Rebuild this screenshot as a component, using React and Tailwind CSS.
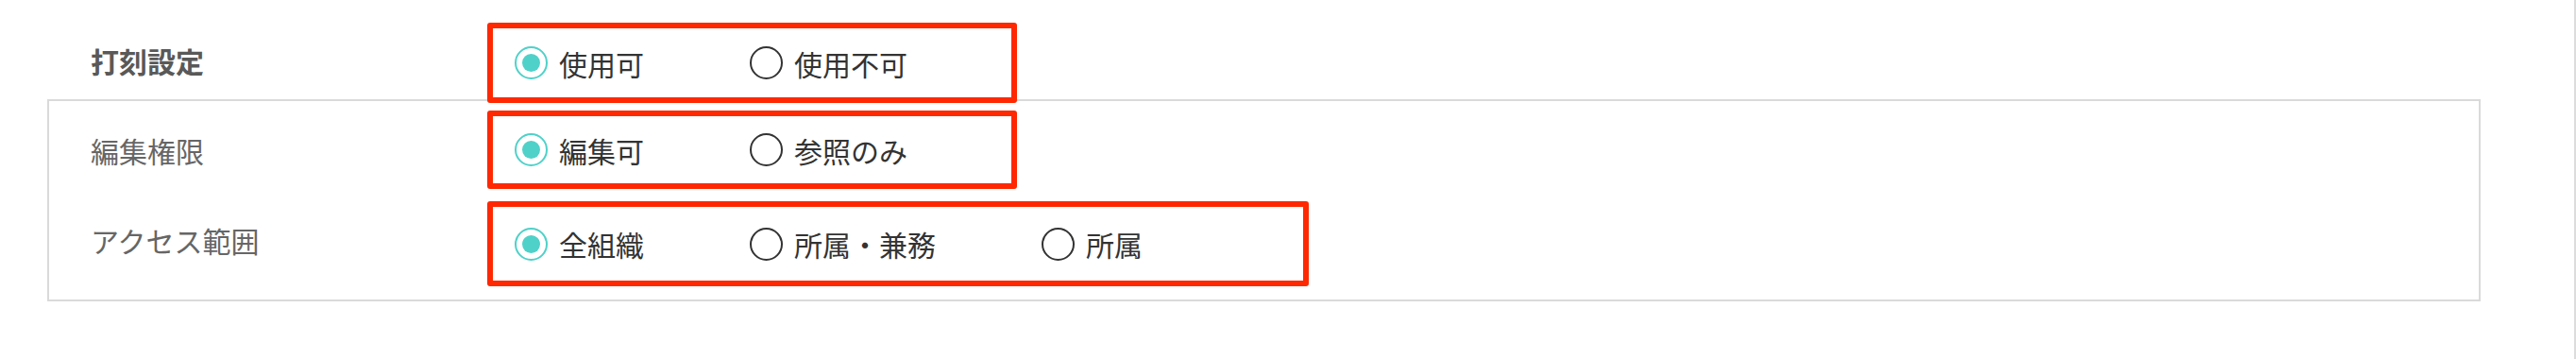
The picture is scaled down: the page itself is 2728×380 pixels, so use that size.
import React from "react";

const font = { fontFamily: '"Noto Sans CJK JP", "Noto Sans", sans-serif' };

function Radio({ checked }) {
  if (checked) {
    return (
      <span className="flex h-[35px] w-[35px] shrink-0 items-center justify-center rounded-full border-2 border-[#4fd1c9]">
        <span className="h-[19px] w-[19px] rounded-full bg-[#4fd1c9]" />
      </span>
    );
  }
  return <span className="h-[35px] w-[35px] shrink-0 rounded-full border-2 border-[#333333]" />;
}

function RadioGroup({ options, selected, className }) {
  return (
    <div className={"relative flex shrink-0 items-center rounded-[3px] border-[6px] border-[#ff2800] pl-[23px] " + className}>
      {options.map((o) => (
        <label key={o} className="mr-[112px] flex shrink-0 items-center gap-[12px] whitespace-nowrap text-[30px] leading-none text-[#333333]">
          <Radio checked={o === selected} />
          <span>{o}</span>
        </label>
      ))}
    </div>
  );
}

export default function App() {
  return (
    <div className="h-[380px] w-full border-r-2 border-[#dcdcdc] bg-white" style={font}>
      <div className="flex items-center pl-[96px] pt-[24px]">
        <div className="-mt-[5px] w-[420px] shrink-0 whitespace-nowrap text-[30px] font-bold leading-none text-[#595959]">打刻設定</div>
        <RadioGroup className="h-[85px] w-[561px]" options={["使用可", "使用不可"]} selected="使用可" />
      </div>

      <div className="-mt-[4px] ml-[50px] flex w-[2577px] flex-col gap-[13px] border-2 border-[#dadada] pb-[14px] pt-[10px]">
        <div className="flex items-center pl-[44px]">
          <div className="w-[420px] shrink-0 whitespace-nowrap text-[30px] leading-none text-[#666666]">編集権限</div>
          <RadioGroup className="h-[83px] w-[561px]" options={["編集可", "参照のみ"]} selected="編集可" />
        </div>
        <div className="flex items-center pl-[44px]">
          <div className="-mt-[8px] w-[420px] shrink-0 whitespace-nowrap text-[30px] leading-none text-[#666666]">アクセス範囲</div>
          <RadioGroup className="h-[90px] w-[870px]" options={["全組織", "所属・兼務", "所属"]} selected="全組織" />
        </div>
      </div>
    </div>
  );
}
